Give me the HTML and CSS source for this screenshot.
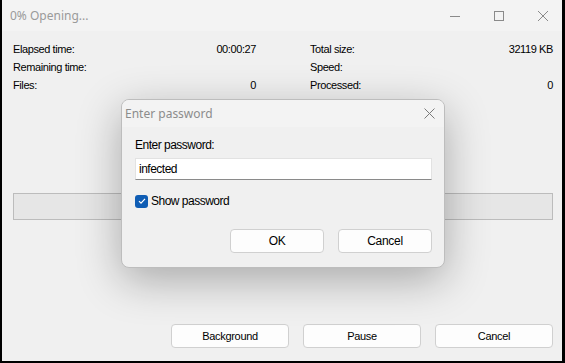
FILE: index.html
```html
<!DOCTYPE html>
<html lang="en">
<head>
    <meta charset="UTF-8">
    <title>0% Opening...</title>
    <link rel="stylesheet" href="styles.css">
</head>
<body>
    <div class="window">
        <div class="titlebar">
            <span class="title">0% Opening...</span>
            <div class="controls">
                <svg width="12" height="12" viewBox="0 0 12 12"><path d="M1 6.5h10" stroke="#8a8a8a" stroke-width="1"/></svg>
                <svg width="12" height="12" viewBox="0 0 12 12"><rect x="1.5" y="1.5" width="9" height="9" fill="none" stroke="#8a8a8a" stroke-width="1"/></svg>
                <svg width="12" height="12" viewBox="0 0 12 12"><path d="M1 1l10 10M11 1L1 11" stroke="#8a8a8a" stroke-width="1"/></svg>
            </div>
        </div>

        <div class="content">
            <div class="stats">
                <div class="col">
                    <div class="row"><span>Elapsed time:</span><span>00:00:27</span></div>
                    <div class="row"><span>Remaining time:</span><span></span></div>
                    <div class="row"><span>Files:</span><span>0</span></div>
                </div>
                <div class="col">
                    <div class="row"><span>Total size:</span><span>32119 KB</span></div>
                    <div class="row"><span>Speed:</span><span></span></div>
                    <div class="row"><span>Processed:</span><span>0</span></div>
                    <div class="row"><span>Compression ratio:</span><span></span></div>
                </div>
            </div>

            <div class="progress"></div>

            <div class="actions">
                <button class="btn">Background</button>
                <button class="btn">Pause</button>
                <button class="btn">Cancel</button>
            </div>
        </div>

        <div class="dialog">
            <div class="dialog-title">
                <span>Enter password</span>
                <svg width="11" height="11" viewBox="0 0 11 11"><path d="M0.5 0.5l10 10M10.5 0.5l-10 10" stroke="#7a7a7a" stroke-width="1"/></svg>
            </div>
            <div class="dialog-body">
                <label class="field-label">Enter password:</label>
                <div class="input">infected</div>
                <div class="check">
                    <span class="box">
                        <svg width="12" height="12" viewBox="0 0 12 12"><path d="M3 6.2l2 2 4-4.4" fill="none" stroke="#fff" stroke-width="1.2"/></svg>
                    </span>
                    <span>Show password</span>
                </div>
                <div class="dialog-actions">
                    <button class="dbtn">OK</button>
                    <button class="dbtn">Cancel</button>
                </div>
            </div>
        </div>
    </div>
</body>
</html>
```

FILE: styles.css
```css
body{
    margin: 0;
    background-color: #000;
    width: 565px;
    height: 363px;
    overflow: hidden;
}

.window{
    position: relative;
    margin: 0 3px 0 2px;
    height: 361px;
    background-color: #f0f0f0;
    font-family: "Liberation Sans", Arial, sans-serif;
    font-size: 11px;
    color: #000;
    overflow: hidden;
}

.titlebar{
    height: 31px;
    background-color: #f3f3f3;
    display: flex;
    align-items: center;
    justify-content: space-between;
}

.title{
    font-family: "Noto Sans", sans-serif;
    font-size: 12px;
    color: #9a9a9a;
    padding-left: 8px;
}

.controls{
    display: flex;
    gap: 32px;
    padding-right: 13px;
}

.content{
    padding: 12px 9px 0 11px;
}

.stats{
    display: flex;
    gap: 54px;
    height: 150px;
}

.col{
    flex: 1;
}

.row{
    display: flex;
    justify-content: space-between;
    height: 18px;
    letter-spacing: -0.4px;
}

.progress{
    height: 25px;
    background-color: #e6e6e6;
    border: 1px solid #bcbcbc;
}

.actions{
    display: flex;
    justify-content: flex-end;
    gap: 14px;
    margin-top: 104px;
}

.btn{
    width: 118px;
    height: 24px;
    background-color: #fdfdfd;
    border: 1px solid #d0d0d0;
    border-radius: 4px;
    font-family: "Liberation Sans", Arial, sans-serif;
    font-size: 11px;
    letter-spacing: -0.3px;
    color: #000;
}

.dialog{
    position: absolute;
    left: 119px;
    top: 99px;
    width: 324px;
    height: 169px;
    background-color: #f0f0f0;
    border: 1px solid #bdbdbd;
    border-radius: 8px;
    box-shadow: 0 12px 44px rgba(0,0,0,0.3);
    overflow: hidden;
    box-sizing: border-box;
}

.dialog-title{
    height: 27px;
    background-color: #f3f3f3;
    display: flex;
    align-items: center;
    justify-content: space-between;
    padding: 0 9px 0 3px;
    font-family: "Noto Sans", sans-serif;
    font-size: 12px;
    color: #8c8c8c;
}

.dialog-body{
    padding: 11px 12px 0 13px;
    font-family: "Liberation Sans", Arial, sans-serif;
    font-size: 12px;
    letter-spacing: -0.5px;
}

.field-label{
    display: block;
    height: 20px;
}

.input{
    height: 22px;
    line-height: 21px;
    background-color: #fff;
    border: 1px solid #e2e2e2;
    border-bottom: 1px solid #8a8a8a;
    padding-left: 3px;
    box-sizing: border-box;
}

.check{
    display: flex;
    align-items: center;
    gap: 3px;
    margin-top: 14px;
}

.box{
    width: 13px;
    height: 13px;
    border-radius: 3px;
    background-color: #0f5db4;
    display: flex;
    align-items: center;
    justify-content: center;
}

.dialog-actions{
    display: flex;
    justify-content: flex-end;
    gap: 14px;
    margin-top: 21px;
}

.dbtn{
    width: 94px;
    height: 24px;
    background-color: #fdfdfd;
    border: 1px solid #d0d0d0;
    border-radius: 4px;
    font-family: "Liberation Sans", Arial, sans-serif;
    font-size: 12px;
    letter-spacing: -0.3px;
    color: #000;
}
```
